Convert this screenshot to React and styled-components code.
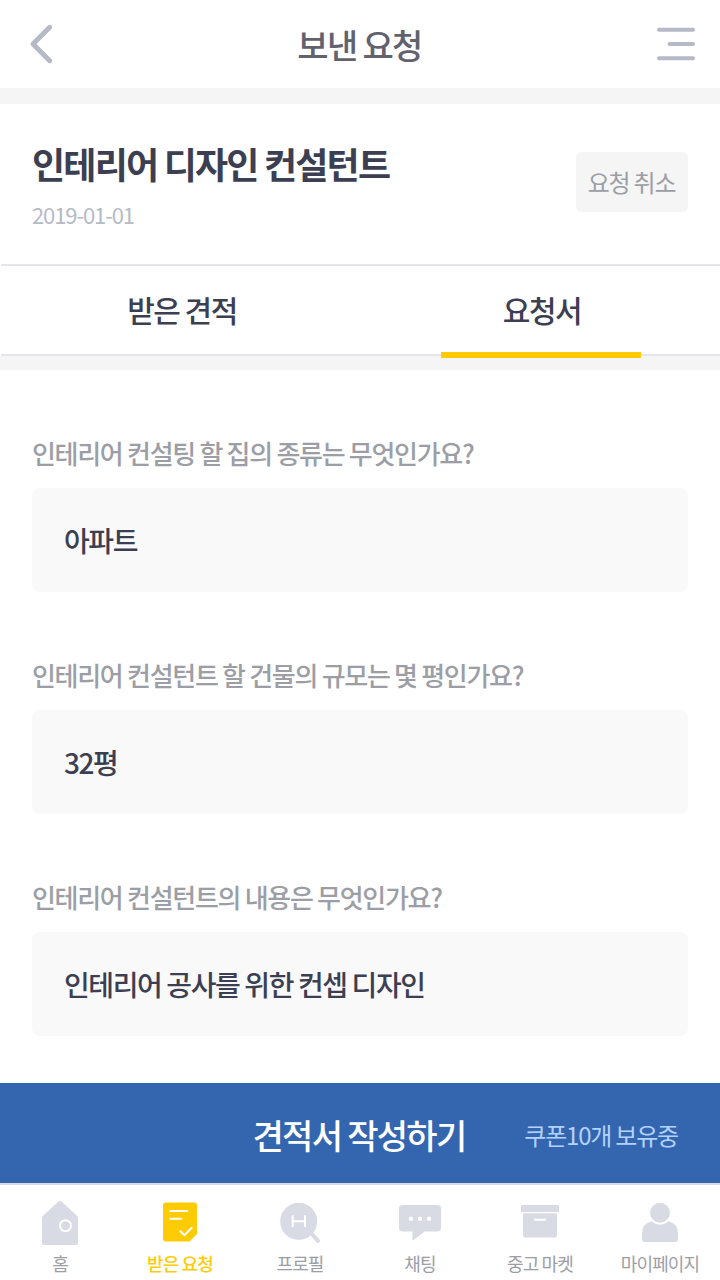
import React from 'react';
import styled, { createGlobalStyle } from 'styled-components';

const GlobalStyle = createGlobalStyle`
  * {
    box-sizing: border-box;
    letter-spacing: -0.05em;
  }
  body {
    margin: 0;
    background-color: #fff;
    font-family: 'Noto Sans CJK KR', 'Noto Sans', sans-serif;
    overflow: hidden;
  }
  h1, h2, p {
    margin: 0;
    font-weight: 500;
  }
  button {
    padding: 0;
    border: 0;
    background: none;
    font-family: inherit;
    cursor: pointer;
  }
  svg {
    display: block;
  }
`;

const Page = styled.div`
  display: flex;
  flex-direction: column;
  width: 720px;
  height: 1280px;
  overflow: hidden;
`;

const Header = styled.header`
  display: flex;
  flex-shrink: 0;
  align-items: center;
  justify-content: space-between;
  height: 104px;
  padding: 0 24px;
  border-bottom: 16px solid #f5f5f5;
`;

const HeaderTitle = styled.h1`
  padding-top: 2px;
  font-size: 34px;
  line-height: 50px;
  color: #62626f;
`;

const Summary = styled.section`
  display: flex;
  flex-shrink: 0;
  align-items: center;
  justify-content: space-between;
  height: 160px;
  padding: 0 32px 4px;
`;

const SummaryTitle = styled.h2`
  padding-top: 2px;
  font-size: 36px;
  font-weight: 700;
  line-height: 54px;
  color: #3c3f52;
`;

const SummaryDate = styled.p`
  margin-top: 8px;
  font-size: 22px;
  font-weight: 400;
  line-height: 32px;
  color: #b5bac6;
`;

const CancelButton = styled.button`
  width: 112px;
  height: 60px;
  padding: 0 1px 2px 0;
  border-radius: 6px;
  background-color: #f5f5f5;
  font-size: 24px;
  color: #9c9ea6;
`;

const Tabs = styled.nav`
  display: flex;
  flex-shrink: 0;
  width: 720px;
  height: 92px;
  margin-left: 1px;
  border-top: 2px solid #e5e6eb;
  border-bottom: 2px solid #e5e6eb;
`;

const Tab = styled.button`
  position: relative;
  flex: 1;
  padding: 0 0 2px 2px;
  font-size: 30px;
  font-weight: 500;
  color: #3c3f52;

  &::after {
    content: '';
    display: ${props => (props.$active ? 'block' : 'none')};
    position: absolute;
    bottom: -4px;
    left: 80px;
    width: 200px;
    height: 6px;
    background-color: #ffcb05;
  }
`;

const Divider = styled.div`
  flex-shrink: 0;
  height: 14px;
  background-color: #f5f5f5;
`;

const Questions = styled.main`
  display: flex;
  flex: 1;
  flex-direction: column;
  gap: 64px;
  padding: 64px 32px 0;
`;

const Question = styled.p`
  height: 54px;
  font-size: 26px;
  line-height: 38px;
  color: #9c9ea6;
`;

const Answer = styled.p`
  height: 104px;
  padding: 0 32px;
  border-radius: 8px;
  background-color: #f9f9f9;
  font-size: 28px;
  line-height: 104px;
  color: #3c3f52;
`;

const WriteBar = styled.div`
  display: grid;
  flex-shrink: 0;
  grid-template-columns: 1fr auto 1fr;
  align-items: center;
  height: 100px;
  padding: 2px 42px 0 40px;
  background-color: #3366af;
`;

const WriteButton = styled.button`
  grid-column: 2;
  font-size: 34px;
  font-weight: 500;
  color: #fff;
`;

const Coupon = styled.span`
  justify-self: end;
  font-size: 24px;
  color: #b3d2ff;
`;

const BottomNav = styled.nav`
  display: flex;
  flex-shrink: 0;
  width: 720px;
  height: 97px;
  border-top: 2px solid #d8dbe3;
`;

const NavItem = styled.button`
  display: flex;
  flex: 1;
  flex-direction: column;
  align-items: center;
  padding-top: 12px;
  font-size: 18px;
  font-weight: ${props => (props.$active ? 500 : 400)};
  line-height: 26px;
  color: ${props => (props.$active ? '#ffcb05' : '#9c9ea6')};

  svg {
    flex-shrink: 0;
    margin-bottom: 5px;
    color: ${props => (props.$active ? '#ffcb05' : '#d8dbe3')};
  }
`;

const BackIcon = () => (
  <svg width="38" height="48" viewBox="24 20 38 48" fill="none" stroke="#b5bac6" strokeWidth="5" strokeLinecap="round" strokeLinejoin="round">
    <path d="M49.7 27.3 33 44l16.7 16.7" />
  </svg>
);

const MenuIcon = () => (
  <svg width="39" height="40" viewBox="657 24 39 40" fill="none" stroke="#b5bac6" strokeWidth="4" strokeLinecap="round">
    <path d="M659 29.8h34M669.5 44H693M659 58.2h34" />
  </svg>
);

const NavIcon = ({ children }) => (
  <svg width="48" height="48" viewBox="0 0 48 48" fill="currentColor">
    {children}
  </svg>
);

const HomeIcon = () => (
  <NavIcon>
    <path d="M22.4 4.6Q24 3.3 25.6 4.6L41.2 19Q42 19.8 42 21V45.5Q42 48 39.5 48H8.5Q6 48 6 45.5V21Q6 19.8 6.8 19Z" />
    <circle cx="29.5" cy="28.7" r="5.5" fill="none" stroke="#fff" strokeWidth="2" />
  </NavIcon>
);

const RequestIcon = () => (
  <NavIcon>
    <path d="M10 5.5H38Q41 5.5 41 8.5V37L33.5 44.5H10Q7 44.5 7 41.5V8.5Q7 5.5 10 5.5Z" />
    <path d="M14.3 14h17M14.3 21.7h11M24.3 34.2l4.2 4 7.2-7.5" fill="none" stroke="#fff" strokeWidth="2" strokeLinecap="round" />
  </NavIcon>
);

const ProfileIcon = () => (
  <NavIcon>
    <circle cx="22.7" cy="24.3" r="18.5" />
    <path d="M34.5 35.5l7.5 8.3" stroke="currentColor" strokeWidth="4" strokeLinecap="round" />
    <path d="M16.7 19v10.3M29 19v10.3M16.7 24.3H29" fill="none" stroke="#fff" strokeWidth="2" strokeLinecap="round" />
  </NavIcon>
);

const ChatIcon = () => (
  <NavIcon>
    <path d="M6.5 8H41.5Q45 8 45 11.5V31Q45 34.5 41.5 34.5H28.5L18 42.8Q16.5 43.8 16.5 42V34.5H6.5Q3 34.5 3 31V11.5Q3 8 6.5 8Z" />
    <g fill="#fff">
      <circle cx="15" cy="21.8" r="2.2" />
      <circle cx="24" cy="21.8" r="2.2" />
      <circle cx="33" cy="21.8" r="2.2" />
    </g>
  </NavIcon>
);

const MarketIcon = () => (
  <NavIcon>
    <rect x="5" y="8" width="38" height="7" rx="1" />
    <path d="M7 16.2H41V38Q41 40.5 38.5 40.5H9.5Q7 40.5 7 38Z" />
    <rect x="18" y="21.8" width="12" height="2" rx="0.5" fill="#fff" />
  </NavIcon>
);

const MyPageIcon = () => (
  <NavIcon>
    <path d="M15.5 24.2Q24 31.5 32.5 24.2Q42 26.5 42 37V42Q42 45 39 45H9Q6 45 6 42V37Q6 26.5 15.5 24.2Z" />
    <circle cx="24" cy="15.7" r="10.7" stroke="#fff" strokeWidth="1.5" />
  </NavIcon>
);

const questions = [
  { question: '인테리어 컨설팅 할 집의 종류는 무엇인가요?', answer: '아파트' },
  { question: '인테리어 컨설턴트 할 건물의 규모는 몇 평인가요?', answer: '32평' },
  { question: '인테리어 컨설턴트의 내용은 무엇인가요?', answer: '인테리어 공사를 위한 컨셉 디자인' },
];

const menus = [
  { label: '홈', Icon: HomeIcon },
  { label: '받은 요청', Icon: RequestIcon, active: true },
  { label: '프로필', Icon: ProfileIcon },
  { label: '채팅', Icon: ChatIcon },
  { label: '중고 마켓', Icon: MarketIcon },
  { label: '마이페이지', Icon: MyPageIcon },
];

const App = () => (
  <Page>
    <GlobalStyle />
    <Header>
      <button type="button"><BackIcon /></button>
      <HeaderTitle>보낸 요청</HeaderTitle>
      <button type="button"><MenuIcon /></button>
    </Header>
    <Summary>
      <div>
        <SummaryTitle>인테리어 디자인 컨설턴트</SummaryTitle>
        <SummaryDate>2019-01-01</SummaryDate>
      </div>
      <CancelButton type="button">요청 취소</CancelButton>
    </Summary>
    <Tabs>
      <Tab type="button">받은 견적</Tab>
      <Tab type="button" $active>요청서</Tab>
    </Tabs>
    <Divider />
    <Questions>
      {questions.map(item => (
        <div key={item.question}>
          <Question>{item.question}</Question>
          <Answer>{item.answer}</Answer>
        </div>
      ))}
    </Questions>
    <WriteBar>
      <WriteButton type="button">견적서 작성하기</WriteButton>
      <Coupon>쿠폰10개 보유중</Coupon>
    </WriteBar>
    <BottomNav>
      {menus.map(({ label, Icon, active }) => (
        <NavItem key={label} type="button" $active={active}>
          <Icon />
          {label}
        </NavItem>
      ))}
    </BottomNav>
  </Page>
);

export default App;
